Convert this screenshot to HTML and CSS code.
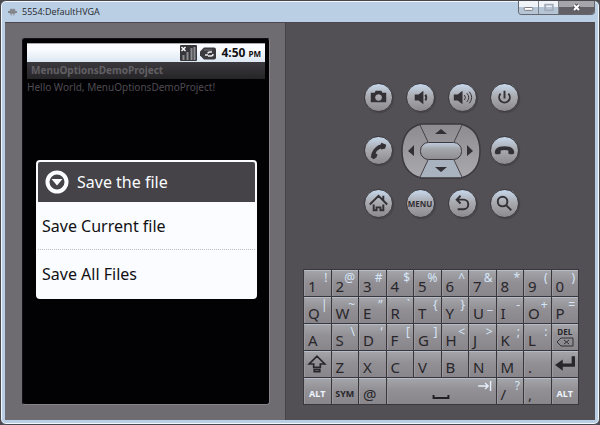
FILE: index.html
```
<!DOCTYPE html>
<html lang="en">
<head>
<meta charset="utf-8">
<title>5554:DefaultHVGA</title>
<link rel="stylesheet" href="styles.css">
</head>
<body>
<div class="window">
  <header class="titlebar">
    <svg class="app-icon" viewBox="0 0 10 10" aria-hidden="true"><path d="M2 2h6v5H2zM0 4h10v2H0zM3 1h1v8H3zM6 1h1v8H6z" fill="#84868a"/></svg>
    <h1 class="window-title">5554:DefaultHVGA</h1>
    <div class="window-controls">
      <button class="control" aria-label="Minimize"><svg viewBox="0 0 20 13"><rect x="5.500" y="6.500" width="9" height="3" rx="1" fill="#fff" stroke="#77787d"/></svg></button>
      <button class="control" aria-label="Maximize"><svg viewBox="0 0 20 13"><path d="M6.500 3.500h8v6h-8z" fill="none" stroke="#a2acba" stroke-width="2"/></svg></button>
      <button class="control close" aria-label="Close"><svg viewBox="0 0 20 13"><path d="M7.500 4l5 5m0-5l-5 5" stroke="#56555a" stroke-width="4"/><path d="M7.500 4l5 5m0-5l-5 5" stroke="#fff" stroke-width="2"/></svg></button>
    </div>
  </header>
  <main class="emulator">
    <section class="device">
      <div class="screen">
        <div class="status">
          <svg class="signal" viewBox="0 0 17 16" aria-hidden="true"><rect width="17" height="16" rx="1" fill="#37363a"/><path d="M3.500 10v5M7.500 7v8M11.500 3v12M14.500 2v13" stroke="#8c8b90" stroke-width="2"/><path d="M1.500 2l4 4m0-4l-4 4" stroke="#fff" stroke-width="1.500"/></svg>
          <svg class="battery" viewBox="0 0 16 13" aria-hidden="true"><path d="M4 .5h10q2 0 2 2v8q0 2-2 2H4l-2-2-2-2v-4l2-2z" fill="#3b3a3e"/><path d="M4 3h8" stroke="#77767b"/><path d="M5 8h3M8 6.500q0-1.500 2-1.500h2M8 9h3q2 0 2-2" stroke="#eef0f4" stroke-width="1.500" fill="none"/></svg>
          <span class="clock">4:50 <small>PM</small></span>
        </div>
        <h2 class="app-title">MenuOptionsDemoProject</h2>
        <p class="hello">Hello World, MenuOptionsDemoProject!</p>
        <div class="dialog" role="dialog" aria-labelledby="dialog-title">
          <div class="dialog-head">
            <svg class="dialog-icon" viewBox="0 0 24 24" aria-hidden="true"><circle cx="12" cy="12" r="9.500" fill="#454347" stroke="#fafcff" stroke-width="4"/><path d="M6.500 9h11L12 15.500z" fill="#fafcff"/></svg>
            <h3 id="dialog-title">Save the file</h3>
          </div>
          <button class="option">Save Current file</button>
          <button class="option">Save All Files</button>
        </div>
      </div>
    </section>
    <section class="controls">
      <div class="hardware">
        <button class="round" aria-label="Camera"><svg viewBox="0 0 28 28"><path fill-rule="evenodd" d="M6 9h4l1-2h6l1 2h4v10H6zM14 10.500a3.500 3.500 0 1 0 .1 0z"/></svg></button>
        <button class="round" aria-label="Volume down"><svg viewBox="0 0 28 28"><path d="M8 11h4l5-4v14l-5-4H8z"/><path class="line" d="M19 11q2 3 0 6"/></svg></button>
        <button class="round" aria-label="Volume up"><svg viewBox="0 0 28 28"><path d="M5 11h4l5-4v14l-5-4H5z"/><path class="line thin" d="M16 11.500q2 2.500 0 5M18.500 9.500q4 4.500 0 9M21 8q5 6 0 12"/></svg></button>
        <button class="round" aria-label="Power"><svg viewBox="0 0 28 28"><path class="line" d="M14 7v8M10 10a5.500 5.500 0 1 0 8 0"/></svg></button>

        <button class="round" aria-label="Call"><svg viewBox="0 0 28 28"><path d="M17 6l5 2-1 4-4 1-1-1q-4 2-5 5l2 1-1 3-3 2-3-2q0-4 3-8 4-5 7-5z"/></svg></button>
        <div class="dpad">
          <svg viewBox="0 0 80 56" role="img" aria-label="Direction pad">
            <defs><linearGradient id="pad" x2="0" y2="1"><stop stop-color="#8d8b8f"/><stop offset="1" stop-color="#aaa9ae"/></linearGradient><linearGradient id="center" x2="0" y2="1"><stop stop-color="#c0cedf"/><stop offset=".4" stop-color="#a3a5aa"/><stop offset="1" stop-color="#8e8c91"/></linearGradient></defs>
            <path d="M20 1h40q19 5 19 27T60 55H20Q1 50 1 28T20 1z" fill="url(#pad)" stroke="#3b393d" stroke-width="1.500"/>
            <path d="M27 37h26l8 17H19z" fill="#a9b2bf"/>
            <path d="M19 2l8 17M61 2l-8 17M27 37l-8 17M53 37l8 17" stroke="#454347"/>
            <rect x="19.500" y="19.500" width="41" height="17" rx="8" fill="url(#center)" stroke="#3b393d"/>
            <path d="M34 11l6-5 6 5zM34 44h12l-6 5zM13 22v11l-6-5zM66 22v11l6-5z" fill="#323034"/>
          </svg>
        </div>
        <button class="round" aria-label="End call"><svg viewBox="0 0 28 28"><path d="M4 15q1-4 5-5 5-1 10 0 4 1 5 5v2q-3 2-6 0v-3q-4-1-8 0v3q-3 2-6 0z"/></svg></button>

        <button class="round" aria-label="Home"><svg viewBox="0 0 28 28"><path class="line" d="M5 15l9-9 9 9M19 10V6M9 15v6h3v-3h4v3h3v-6"/></svg></button>
        <button class="round menu">MENU</button>
        <button class="round" aria-label="Back"><svg viewBox="0 0 28 28"><path class="line" d="M12 6l-4 4 4 4M8 10h7a5 5 0 0 1 0 10H9"/></svg></button>
        <button class="round" aria-label="Search"><svg viewBox="0 0 28 28"><circle class="line" cx="12" cy="12" r="5"/><path class="line" d="M15.500 15.500l5.500 5.500"/></svg></button>
      </div>

      <div class="keyboard">
        <button class="key">1<sup>!</sup></button><button class="key">2<sup>@</sup></button><button class="key">3<sup>#</sup></button><button class="key">4<sup>$</sup></button><button class="key">5<sup>%</sup></button><button class="key">6<sup>^</sup></button><button class="key">7<sup>&amp;</sup></button><button class="key">8<sup>*</sup></button><button class="key">9<sup>(</sup></button><button class="key">0<sup>)</sup></button>
        <button class="key">Q<sup>|</sup></button><button class="key">W<sup>~</sup></button><button class="key">E<sup>”</sup></button><button class="key">R<sup>`</sup></button><button class="key">T<sup>{</sup></button><button class="key">Y<sup>}</sup></button><button class="key">U<sup>_</sup></button><button class="key">I<sup>-</sup></button><button class="key">O<sup>+</sup></button><button class="key">P<sup>=</sup></button>
        <button class="key">A</button><button class="key">S<sup>\</sup></button><button class="key">D<sup>‘</sup></button><button class="key">F<sup>[</sup></button><button class="key">G<sup>]</sup></button><button class="key">H<sup>&lt;</sup></button><button class="key">J<sup>&gt;</sup></button><button class="key">K<sup>;</sup></button><button class="key">L<sup>:</sup></button>
        <button class="key del"><span>DEL</span><svg viewBox="0 0 18 10" aria-hidden="true"><path d="M1 5l4-4h12v8H5zM8 3l5 4M13 3L8 7" fill="none" stroke="#323034"/></svg></button>
        <button class="key icon" aria-label="Shift"><svg viewBox="0 0 18 18"><path d="M9 2l7 7h-4v3H6V9H2zM6.500 14h5v2h-5z" fill="none" stroke="#28262a" stroke-width="1.500"/></svg></button><button class="key">Z</button><button class="key">X</button><button class="key">C</button><button class="key">V</button><button class="key">B</button><button class="key">N</button><button class="key">M</button><button class="key">.</button>
        <button class="key icon" aria-label="Enter"><svg viewBox="0 0 18 18"><path d="M16.500 2v8H6" fill="none" stroke="#28262a" stroke-width="3"/><path d="M0 10l7-5v10z" fill="#28262a"/></svg></button>
        <button class="key word light">ALT</button><button class="key word">SYM</button><button class="key">@</button>
        <button class="key space" aria-label="Space"><svg viewBox="0 0 110 26"><path d="M47 17v3h15v-3" fill="none" stroke="#222024" stroke-width="2"/><path d="M92 8h10M99 5l3 3-3 3M104.500 3v10" fill="none" stroke="#e4eefa" stroke-width="1.500"/></svg></button>
        <button class="key">/<sup>?</sup></button><button class="key">,</button><button class="key word light">ALT</button>
      </div>
    </section>
  </main>
</div>
</body>
</html>
```
FILE: styles.css
```
* { box-sizing: border-box; }

body {
  margin: 0;
  background: #4c4a50;
  font-family: "Noto Sans", "Open Sans", sans-serif;
}

h1, h2, h3, p { margin: 0; font-weight: 400; }

button {
  margin: 0;
  padding: 0;
  border: 0;
  background: none;
  color: inherit;
  font: inherit;
}

svg { display: block; }

.window {
  display: flex;
  flex-direction: column;
  min-height: 100vh;
  padding: 0 4px 4px;
  border: 1px solid #47484e;
  border-radius: 6px;
  background: #bbcfe4;
  box-shadow: inset 0 0 0 1px #f4f8fd;
}

.titlebar {
  display: flex;
  align-items: center;
  gap: 5px;
  height: 21px;
  padding-left: 3px;
}

.app-icon { width: 9px; height: 10px; }

.window-title {
  flex: 1;
  color: #26282c;
  font: 9px/20px "Open Sans", sans-serif;
}

.window-controls {
  display: flex;
  align-self: flex-start;
  border: 1px solid #66676d;
  border-top: 0;
  border-radius: 0 0 4px 4px;
  overflow: hidden;
}

.control {
  width: 20px;
  height: 13px;
  border-right: 1px solid #7d838c;
  background: linear-gradient(#f0f4f8 50%, #b6c5d6 50%);
}

.control svg { width: 100%; height: 100%; }

.close {
  width: 35px;
  border-right: 0;
  background: linear-gradient(#a6a5aa 50%, #626066 50%);
}

.emulator {
  display: grid;
  grid-template-columns: 281fr 309fr;
  flex: 1;
  border-top: 1px solid #4a484c;
}

.device {
  display: flex;
  padding: 15px 15px 15px 17px;
  border-right: 1px solid #454347;
  background: #6e6c70;
}

.screen {
  flex: 1;
  padding: 4px;
  border: 1px solid #111013;
  border-right-color: #858387;
  border-bottom-color: #858387;
  border-radius: 3px;
  background: #020104;
}

.status {
  display: flex;
  align-items: center;
  justify-content: flex-end;
  gap: 3px;
  height: 19px;
  padding-right: 4px;
  border-top: 1px solid #aaa9ae;
  background: linear-gradient(#fafcff 30%, #dce7f3);
}

.signal { width: 17px; height: 16px; }
.battery { width: 16px; height: 13px; }

.clock {
  margin-left: 2px;
  color: #111013;
  font-size: 12px;
  font-weight: 700;
  line-height: 18px;
}

.clock small { font-size: 8px; }

.app-title {
  padding-left: 4px;
  background: linear-gradient(#3b393d, #252427);
  color: #626065;
  font-size: 10px;
  font-weight: 700;
  line-height: 17px;
}

.hello {
  color: #4e4c51;
  font-size: 10px;
  line-height: 16px;
}

.dialog {
  margin: 65px 8px 0 9px;
  border: 2px solid #fafcff;
  border-radius: 4px;
  background: #fafcff;
  overflow: hidden;
}

.dialog-head {
  display: flex;
  align-items: center;
  gap: 8px;
  height: 40px;
  padding-left: 7px;
  background: #454347;
  color: #fafcff;
}

.dialog-head h3 { font-size: 16px; }
.dialog-icon { width: 24px; height: 24px; }

.option {
  display: block;
  width: 100%;
  height: 47px;
  padding-left: 4px;
  color: #111013;
  font-size: 16px;
  text-align: left;
}

.option + .option {
  height: 48px;
  border-top: 1px dotted #b9bcc2;
}

.controls {
  display: flex;
  flex-direction: column;
  align-items: center;
  justify-content: space-between;
  padding: 60px 16px 15px 17px;
  background: #525054;
}

.hardware {
  display: grid;
  grid-template-columns: repeat(4, 28px);
  grid-template-rows: repeat(3, 29px);
  column-gap: 14px;
  row-gap: 24px;
  place-items: center;
}

.round {
  width: 29px;
  height: 29px;
  border: 1px solid #3b393d;
  border-radius: 50%;
  background: linear-gradient(#c6d8ec, #aaabb0 45%, #8c8a8f);
  box-shadow: 1px 1px 1px #454347;
}

.round svg { width: 27px; height: 27px; fill: #333135; }
.round .line { fill: none; stroke: #333135; stroke-width: 2; }
.round .thin { stroke-width: 1; }

.menu {
  color: #333135;
  font-size: 8px;
  font-weight: 700;
}

.dpad { grid-column: 2 / 4; }
.dpad svg { width: 80px; height: 56px; }

.keyboard {
  display: grid;
  grid-template-columns: repeat(10, 1fr);
  grid-auto-rows: 26px;
  gap: 1px;
  width: 100%;
  padding: 1px;
  background: #39373b;
}

.key {
  position: relative;
  padding: 5px 0 0 4px;
  background: linear-gradient(#a5a6ab, #929095 45%, #88868b);
  box-shadow: inset 0 1px #b3bcc8, inset 1px 0 #9b9a9f;
  color: #28262a;
  font-size: 15px;
  line-height: 20px;
  text-align: left;
}

.key sup {
  position: absolute;
  top: 1px;
  right: 3px;
  color: #d6e6f8;
  font-size: 12px;
  line-height: 14px;
}

.key.word {
  padding: 6px 0 0;
  font-size: 9px;
  font-weight: 700;
  text-align: center;
}

.key.light { color: #edf4fc; }

.key.icon { padding: 0; }

.key.icon svg { width: 20px; height: 20px; margin: 0 auto; }

.key.del {
  padding: 0;
  font-size: 8px;
  font-weight: 700;
  line-height: 10px;
  text-align: center;
}

.del svg { width: 18px; height: 10px; margin: 0 auto; }

.key.space { grid-column: span 4; padding: 0; }
.space svg { width: 100%; height: 26px; }
```
